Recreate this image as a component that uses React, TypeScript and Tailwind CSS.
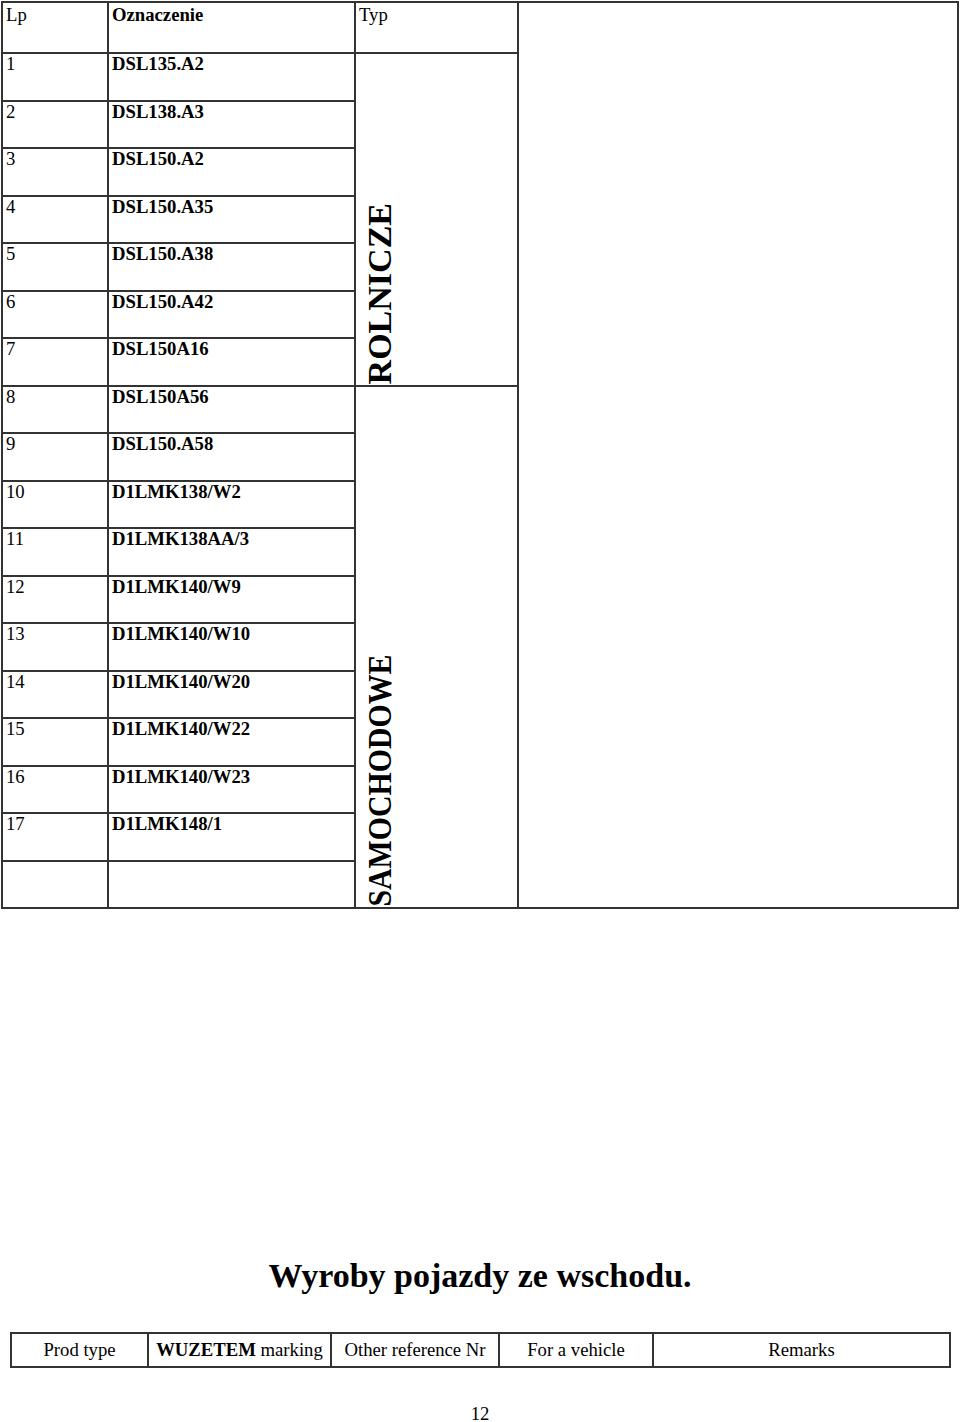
const rows = [
  "DSL135.A2",
  "DSL138.A3",
  "DSL150.A2",
  "DSL150.A35",
  "DSL150.A38",
  "DSL150.A42",
  "DSL150A16",
  "DSL150A56",
  "DSL150.A58",
  "D1LMK138/W2",
  "D1LMK138AA/3",
  "D1LMK140/W9",
  "D1LMK140/W10",
  "D1LMK140/W20",
  "D1LMK140/W22",
  "D1LMK140/W23",
  "D1LMK148/1",
  "",
];

const cell = "border-2 border-[#333] align-top pl-[3px] pt-0 h-[47.5px]";
const head = "border-2 border-[#333] align-top pl-[3px] pt-[2px] h-[51px]";
const box = "border-2 border-[#333] h-[34px] p-0";

export default function App() {
  return (
    <div className="w-[960px] bg-white text-black font-['Liberation_Serif',serif] text-[18.7px] leading-[1.107]">
      <table className="ml-[1px] mt-[1px] w-[956px] table-fixed border-collapse">
        <colgroup>
          <col className="w-[106px]" />
          <col className="w-[247px]" />
          <col className="w-[163px]" />
          <col className="w-[440px]" />
        </colgroup>
        <tbody>
          <tr>
            <td className={head}>Lp</td>
            <td className={head + " font-bold"}>Oznaczenie</td>
            <td className={head}>Typ</td>
            <td rowSpan={19} className="border-2 border-[#333] p-0" />
          </tr>
          {rows.map((name, i) => (
            <tr key={i}>
              <td className={cell}>{name ? i + 1 : ""}</td>
              <td className={cell + " font-bold"}>{name}</td>
              {i === 0 && (
                <td rowSpan={7} className="border-2 border-[#333] p-0 pl-[7px] align-bottom">
                  <div className="[writing-mode:vertical-rl] rotate-180 font-bold text-[34px] leading-[34px]">
                    ROLNICZE
                  </div>
                </td>
              )}
              {i === 7 && (
                <td rowSpan={11} className="border-2 border-[#333] p-0 pl-[7px] align-bottom overflow-hidden">
                  <div className="[writing-mode:vertical-rl] rotate-180 scale-y-[0.878] translate-y-[17px] font-bold text-[34px] leading-[34px]">
                    SAMOCHODOWE
                  </div>
                </td>
              )}
            </tr>
          ))}
        </tbody>
      </table>

      <div className="mt-[348px] text-center font-bold text-[34px] leading-[38px]">
        Wyroby pojazdy ze wschodu.
      </div>

      <table className="mx-[10px] mt-[37px] w-[939px] table-fixed border-collapse text-center">
        <colgroup>
          <col className="w-[137px]" />
          <col className="w-[183px]" />
          <col className="w-[168px]" />
          <col className="w-[154px]" />
          <col className="w-[297px]" />
        </colgroup>
        <tbody>
          <tr>
            <td className={box}>Prod type</td>
            <td className={box}>
              <span className="font-bold">WUZETEM</span> marking
            </td>
            <td className={box}>Other reference Nr</td>
            <td className={box}>For a vehicle</td>
            <td className={box}>Remarks</td>
          </tr>
        </tbody>
      </table>

      <div className="mt-[38px] text-center leading-[16px]">12</div>
    </div>
  );
}
